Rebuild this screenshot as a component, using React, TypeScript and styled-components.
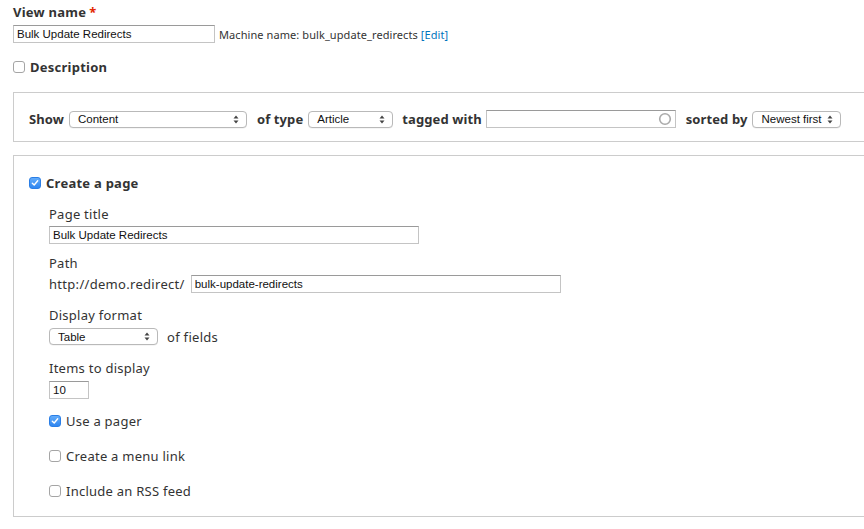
import React from 'react'
import styled, { createGlobalStyle } from 'styled-components'

const GlobalStyle = createGlobalStyle`
	html, body {
		margin: 0;
		padding: 0;
		background: #fff;
		overflow: hidden;
	}
	body {
		font-family: 'Noto Sans', 'DejaVu Sans', sans-serif;
		color: #333;
	}
`

const Page = styled.div`
	width: 100%;
	overflow: hidden;
	padding: 4px 0 0 13px;
	box-sizing: border-box;
	height: 529px;
`

const FieldLabel = styled.div<{ $bold?: boolean }>`
	font-size: 13px;
	line-height: 17px;
	letter-spacing: 0.25px;
	font-weight: ${(p) => (p.$bold ? 700 : 400)};
	color: #333;
`

const Required = styled.span`
	color: #e32700;
	margin-left: 3px;
`

const Row = styled.div<{ $gap?: number }>`
	display: flex;
	align-items: center;
	gap: ${(p) => p.$gap ?? 4}px;
`

const TextInput = styled.input<{ $width: number }>`
	width: ${(p) => p.$width}px;
	height: 18px;
	box-sizing: border-box;
	margin: 0;
	padding: 0 3px;
	border: 1px solid #c4c4c4;
	border-top-color: #9a9a9a;
	border-radius: 0;
	font-family: 'Liberation Sans', Arial, sans-serif;
	font-size: 11.5px;
	color: #111;
	background: #fff;
	outline: none;
`

const MachineName = styled.span`
	font-size: 11px;
	letter-spacing: 0.08px;
	color: #333;
`

const EditLink = styled.a`
	color: #0074bd;
	text-decoration: none;
`

const CheckRow = styled.label<{ $bold?: boolean }>`
	display: flex;
	align-items: center;
	gap: 5px;
	height: 17px;
	font-size: 13px;
	letter-spacing: 0.25px;
	font-weight: ${(p) => (p.$bold ? 700 : 400)};
	color: #333;
`

const Box = styled.span<{ $checked?: boolean }>`
	width: 12px;
	height: 12px;
	box-sizing: border-box;
	border-radius: 3px;
	display: flex;
	align-items: center;
	justify-content: center;
	flex-shrink: 0;
	border: 1px solid ${(p) => (p.$checked ? '#2a7ee6' : '#a5a5a5')};
	background: ${(p) =>
		p.$checked ? 'linear-gradient(#63acfa, #2f86f0)' : '#fff'};
`

const Fieldset = styled.div<{ $top: number }>`
	margin-top: ${(p) => p.$top}px;
	margin-right: -40px;
	border: 1px solid #ccc;
`

const FilterRow = styled.div`
	display: flex;
	align-items: center;
	height: 18px;
	padding: 17px 0 13px 15px;
`

const InlineLabel = styled.span<{ $before?: number; $after?: number }>`
	font-size: 13px;
	font-weight: 700;
	letter-spacing: 0.1px;
	margin-left: ${(p) => p.$before ?? 0}px;
	margin-right: ${(p) => p.$after ?? 5}px;
	white-space: nowrap;
`

const SelectBox = styled.div<{ $width: number }>`
	width: ${(p) => p.$width}px;
	height: 17px;
	box-sizing: border-box;
	border: 1px solid #b9b9b9;
	border-radius: 4px;
	background: #fff;
	display: flex;
	align-items: center;
	justify-content: space-between;
	padding: 0 7px 0 8px;
	font-family: 'Liberation Sans', Arial, sans-serif;
	font-size: 11.5px;
	color: #111;
	box-shadow: 0 0.5px 0 rgba(0, 0, 0, 0.08);
`

const TagField = styled.div`
	width: 190px;
	height: 18px;
	box-sizing: border-box;
	border: 1px solid #c4c4c4;
	border-top-color: #9a9a9a;
	display: flex;
	align-items: center;
	justify-content: flex-end;
	padding-right: 3px;
`

const PageBody = styled.div`
	padding: 18px 0 16px 15px;
`

const Indent = styled.div`
	margin-left: 20px;
`

const Field = styled.div<{ $top?: number; $gap?: number }>`
	margin-top: ${(p) => p.$top ?? 14.5}px;
	display: flex;
	flex-direction: column;
	gap: ${(p) => p.$gap ?? 3.5}px;
`

const PlainText = styled.span`
	font-size: 13px;
	letter-spacing: 0.3px;
	color: #333;
`

const CheckList = styled.div`
	margin-top: 14px;
	display: flex;
	flex-direction: column;
	gap: 18px;
`

const Check = ({ checked }: { checked?: boolean }) => (
	<Box $checked={checked}>
		{checked && (
			<svg width="8" height="8" viewBox="0 0 8 8">
				<path
					d="M1.3 4.2 L3.2 6 L6.7 1.8"
					fill="none"
					stroke="#fff"
					strokeWidth="1.4"
					strokeLinecap="round"
					strokeLinejoin="round"
				/>
			</svg>
		)}
	</Box>
)

const Select = ({ value, width }: { value: string; width: number }) => (
	<SelectBox $width={width}>
		<span>{value}</span>
		<svg width="6" height="9" viewBox="0 0 6 9">
			<path d="M3 0.5 L5.5 3.5 L0.5 3.5 Z" fill="#444" />
			<path d="M3 8.5 L5.5 5.5 L0.5 5.5 Z" fill="#444" />
		</svg>
	</SelectBox>
)

const App = () => {
	return (
		<>
			<GlobalStyle />
			<Page>
				<FieldLabel $bold>
					View name<Required>*</Required>
				</FieldLabel>
				<Row $gap={4} style={{ marginTop: 4 }}>
					<TextInput $width={202} readOnly defaultValue="Bulk Update Redirects" />
					<MachineName>
						Machine name: bulk_update_redirects{' '}
						<EditLink href="#">[Edit]</EditLink>
					</MachineName>
				</Row>
				<CheckRow $bold style={{ marginTop: 15 }}>
					<Check />
					Description
				</CheckRow>

				<Fieldset $top={17}>
					<FilterRow>
						<InlineLabel>Show</InlineLabel>
						<Select value="Content" width={178} />
						<InlineLabel $before={10}>of type</InlineLabel>
						<Select value="Article" width={85} />
						<InlineLabel $before={9} $after={4}>
							tagged with
						</InlineLabel>
						<TagField>
							<svg width="14" height="14" viewBox="0 0 14 14">
								<circle cx="7" cy="7" r="5.3" fill="none" stroke="#aaa" strokeWidth="1.6" />
							</svg>
						</TagField>
						<InlineLabel $before={10}>sorted by</InlineLabel>
						<Select value="Newest first" width={89} />
					</FilterRow>
				</Fieldset>

				<Fieldset $top={13}>
					<PageBody>
						<CheckRow $bold>
							<Check checked />
							Create a page
						</CheckRow>
						<Indent>
							<Field>
								<FieldLabel>Page title</FieldLabel>
								<TextInput $width={370} readOnly defaultValue="Bulk Update Redirects" />
							</Field>
							<Field $top={11} $gap={2.5}>
								<FieldLabel>Path</FieldLabel>
								<Row $gap={6}>
									<PlainText>http://demo.redirect/</PlainText>
									<TextInput $width={370} readOnly defaultValue="bulk-update-redirects" />
								</Row>
							</Field>
							<Field $top={14.5}>
								<FieldLabel>Display format</FieldLabel>
								<Row $gap={9}>
									<Select value="Table" width={109} />
									<PlainText>of fields</PlainText>
								</Row>
							</Field>
							<Field $top={14.5}>
								<FieldLabel>Items to display</FieldLabel>
								<TextInput $width={40} readOnly defaultValue="10" />
							</Field>
							<CheckList>
								<CheckRow>
									<Check checked />
									Use a pager
								</CheckRow>
								<CheckRow>
									<Check />
									Create a menu link
								</CheckRow>
								<CheckRow>
									<Check />
									Include an RSS feed
								</CheckRow>
							</CheckList>
						</Indent>
					</PageBody>
				</Fieldset>
			</Page>
		</>
	)
}

export default App
